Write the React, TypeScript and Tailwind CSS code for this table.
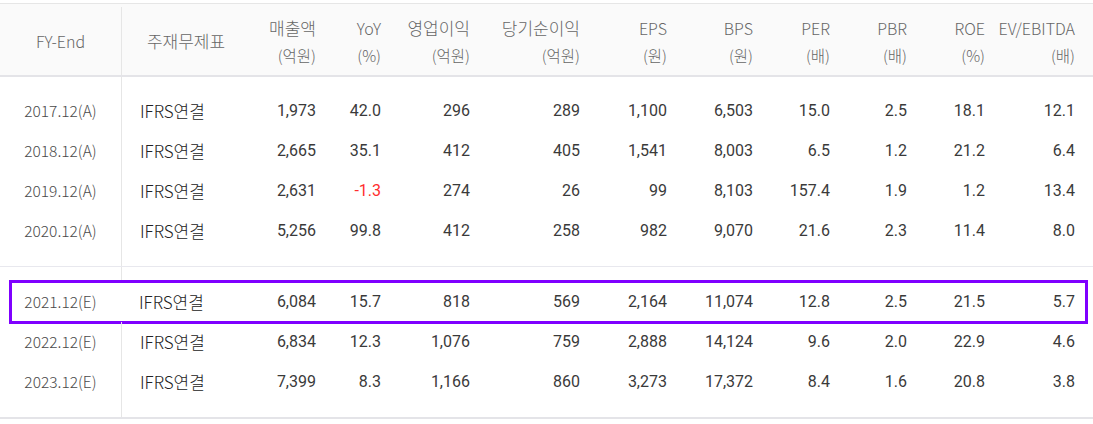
const COLS = 'grid grid-cols-[121px_129px_70px_65px_89px_110px_87px_86px_77px_77px_78px_90px_1fr]'

type Row = {
  fy: string
  vals: string[]
  hl?: boolean
}

// [제목, 단위, 한글 여부]
const HEAD: [string, string, boolean][] = [
  ['매출액', '(억원)', true],
  ['YoY', '(%)', false],
  ['영업이익', '(억원)', true],
  ['당기순이익', '(억원)', true],
  ['EPS', '(원)', false],
  ['BPS', '(원)', false],
  ['PER', '(배)', false],
  ['PBR', '(배)', false],
  ['ROE', '(%)', false],
  ['EV/EBITDA', '(배)', false],
]

const ACTUAL: Row[] = [
  { fy: '2017.12(A)', vals: ['1,973', '42.0', '296', '289', '1,100', '6,503', '15.0', '2.5', '18.1', '12.1'] },
  { fy: '2018.12(A)', vals: ['2,665', '35.1', '412', '405', '1,541', '8,003', '6.5', '1.2', '21.2', '6.4'] },
  { fy: '2019.12(A)', vals: ['2,631', '-1.3', '274', '26', '99', '8,103', '157.4', '1.9', '1.2', '13.4'] },
  { fy: '2020.12(A)', vals: ['5,256', '99.8', '412', '258', '982', '9,070', '21.6', '2.3', '11.4', '8.0'] },
]

const ESTIMATE: Row[] = [
  { fy: '2021.12(E)', vals: ['6,084', '15.7', '818', '569', '2,164', '11,074', '12.8', '2.5', '21.5', '5.7'], hl: true },
  { fy: '2022.12(E)', vals: ['6,834', '12.3', '1,076', '759', '2,888', '14,124', '9.6', '2.0', '22.9', '4.6'] },
  { fy: '2023.12(E)', vals: ['7,399', '8.3', '1,166', '860', '3,273', '17,372', '8.4', '1.6', '20.8', '3.8'] },
]

function Spacer({ h }: { h: string }) {
  return (
    <div className={`${COLS} ${h}`}>
      <div />
      <div className="border-l border-[#e6e6e6]" />
    </div>
  )
}

function DataRow({ r }: { r: Row }) {
  return (
    <div className={`${COLS} relative h-10 items-center`}>
      <div className="text-center text-[15.5px] font-light text-[#4a4a4a]">{r.fy}</div>
      <div
        className={`flex h-full items-center pl-[18px] text-[17px] font-light text-[#222] ${
          r.hl ? '' : 'border-l border-[#e6e6e6]'
        }`}
      >
        IFRS연결
      </div>
      {r.vals.map((v, i) => (
        <div
          key={i}
          className={`pr-1 text-right font-['Roboto',sans-serif] text-[16px] ${
            v.startsWith('-') ? 'text-[#ff2d2d]' : 'text-[#3a3a3a]'
          }`}
        >
          {v}
        </div>
      ))}
      {r.hl && (
        <div className="pointer-events-none absolute -top-[2px] -bottom-[2px] left-[9px] right-[5px] border-[3px] border-[#7f00ff]" />
      )}
    </div>
  )
}

export default function App() {
  return (
    <div className="w-[1093px] bg-white pt-[3px] font-['Noto_Sans_CJK_KR',sans-serif]">
      <div className="border-t border-[#e6e6e6]">
        {/* 헤더 */}
        <div className={`${COLS} h-[73px] items-center border-b-2 border-[#e4e4e8] bg-[#fafafa] pt-[3px] font-light text-[#666]`}>
          <div className="text-center text-[16px]">FY-End</div>
          <div className="flex h-full items-center justify-center border-l border-[#e6e6e6] text-[17px]">주재무제표</div>
          {HEAD.map(([a, b, ko]) => (
            <div key={a} className="pr-1 text-right">
              <div className={`leading-[28px] ${ko ? 'text-[17px]' : 'text-[16px]'}`}>{a}</div>
              <div className="text-[15.5px] leading-[26px]">{b}</div>
            </div>
          ))}
        </div>

        <Spacer h="h-[14px]" />
        {ACTUAL.map((r) => (
          <DataRow key={r.fy} r={r} />
        ))}
        <Spacer h="h-[15px]" />

        <div className="border-t border-[#e8e8ee]">
          <Spacer h="h-[15px]" />
          {ESTIMATE.map((r) => (
            <DataRow key={r.fy} r={r} />
          ))}
          <Spacer h="h-[15px]" />
        </div>

        <div className="border-t-2 border-[#e4e4e8]" />
      </div>
    </div>
  )
}
